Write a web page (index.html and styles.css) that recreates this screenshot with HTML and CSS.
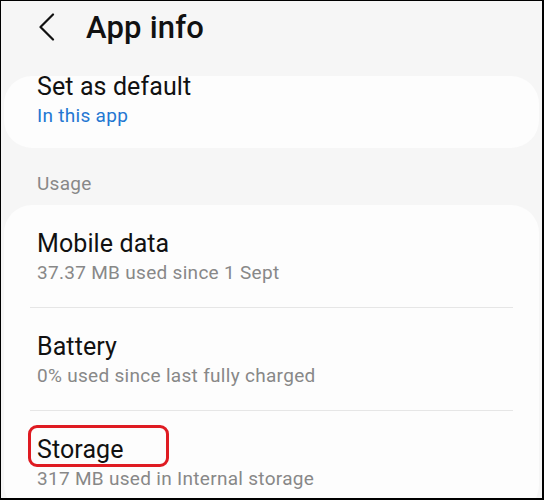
FILE: index.html
```html
<!DOCTYPE html>
<html>
<head>
	<meta charset="utf-8">
	<title>App info</title>
	<link rel="stylesheet" href="styles.css">
</head>
<body>
	<div class="screen">
		<div class="header">
			<svg class="back" width="20" height="30" viewBox="0 0 20 30">
				<path d="M14 1.5 L1.5 14 L14 26.5" fill="none" stroke="#111" stroke-width="2.2" stroke-linecap="round" stroke-linejoin="round"/>
			</svg>
			<h1>App info</h1>
		</div>

		<div class="card card-top">
			<div class="title first">Set as default</div>
			<div class="sub link">In this app</div>
		</div>

		<div class="section">Usage</div>

		<div class="card">
			<div class="item">
				<div class="title">Mobile data</div>
				<div class="sub">37.37 MB used since 1 Sept</div>
			</div>
			<div class="divider"></div>
			<div class="item">
				<div class="title">Battery</div>
				<div class="sub">0% used since last fully charged</div>
			</div>
			<div class="divider"></div>
			<div class="item highlight">
				<div class="title">Storage</div>
				<div class="sub">317 MB used in Internal storage</div>
				<span class="mark"></span>
			</div>
		</div>
	</div>
</body>
</html>
```

FILE: styles.css
```css
body{
	margin: 0;
	font-family: Roboto, "Noto Sans", sans-serif;
	background: #fff;
}
.screen{
	box-sizing: border-box;
	width: 544px;
	height: 500px;
	overflow: hidden;
	background: #f6f6f6;
	border-top: 1px solid #000;
	border-left: 1px solid #000;
	border-right: 2px solid #000;
	border-bottom: 2px solid #000;
}
.header{
	display: flex;
	align-items: center;
	height: 55px;
	padding-left: 38px;
}
.back{
	display: block;
	margin-top: -1px;
}
h1{
	margin: -2px 0 0 27px;
	font-size: 31px;
	font-weight: 500;
	color: #111;
	letter-spacing: 0.2px;
}
.card{
	display: flow-root;
	margin: 0 3px 0 3px;
	background: #fdfdfd;
	border-radius: 28px;
}
.card-top{
	margin-top: 20px;
	padding: 0 33px 20px;
	height: 52px;
}
.title{
	font-size: 25px;
	line-height: 34px;
	color: #111;
	letter-spacing: 0.1px;
}
.first{
	margin-top: -6px;
}
.sub{
	font-size: 19px;
	line-height: 24px;
	color: #888;
	letter-spacing: 0.3px;
}
.link{
	color: #2377d2;
}
.section{
	margin: 24px 0 9px 36px;
	font-size: 19px;
	line-height: 24px;
	color: #888;
	letter-spacing: 0.3px;
}
.item{
	position: relative;
	padding: 22px 33px;
}
.divider{
	height: 1px;
	margin: 0 26px;
	background: #e6e6e6;
}
.mark{
	position: absolute;
	left: 24px;
	top: 14px;
	width: 135px;
	height: 36px;
	border: 3px solid #df1b22;
	border-radius: 9px;
}
```
